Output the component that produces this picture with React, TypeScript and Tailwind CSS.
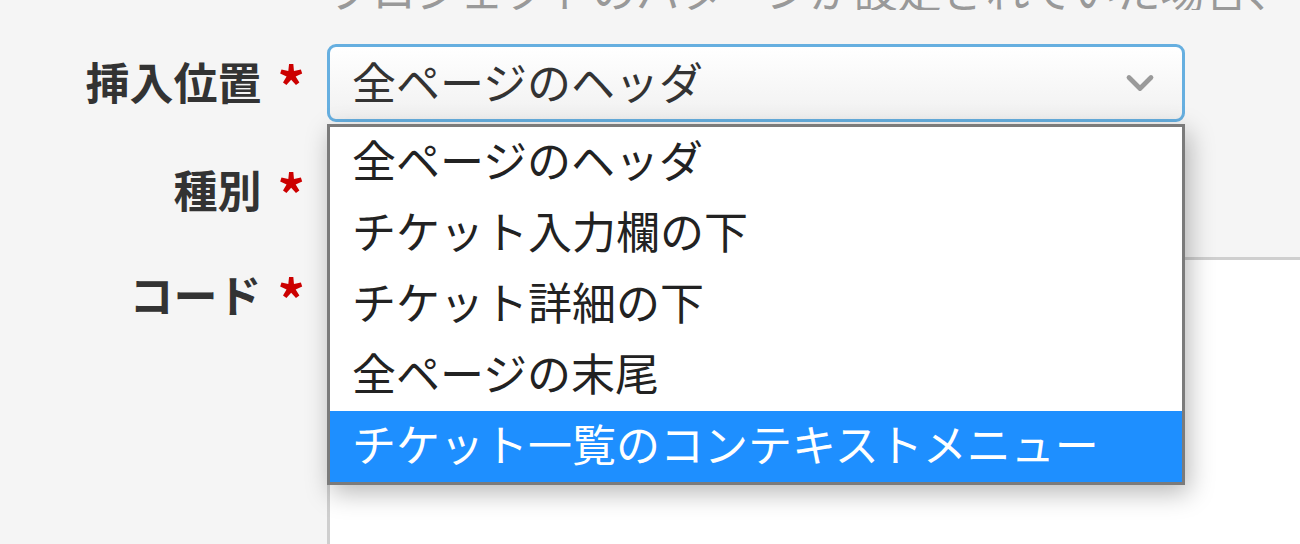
import { ChevronDown } from 'lucide-react'

const options = [
  '全ページのヘッダ',
  'チケット入力欄の下',
  'チケット詳細の下',
  '全ページの末尾',
  'チケット一覧のコンテキストメニュー',
]

function Label({ text }: { text: string }) {
  return (
    <div className="flex h-[78px] w-[327px] shrink-0 items-center justify-end pr-[22px] text-[44px] font-semibold text-[#333]">
      <span className="-translate-y-[2px]">{text}</span>
      <span className="ml-[16px] translate-y-[2px] text-[54px] leading-none text-[#cc0000]">*</span>
    </div>
  )
}

export default function App() {
  const selected = 4

  return (
    <div
      className="relative h-[544px] w-[1300px] overflow-hidden bg-[#f5f5f5]"
      style={{ fontFamily: '"Noto Sans CJK JP", "Noto Sans", sans-serif' }}
    >
      {/* hint text, cut off at the top */}
      <div className="h-[10px] overflow-hidden pl-[328px]">
        <div className="mt-[-33px] whitespace-nowrap text-[44px] leading-[44px] text-[#999]">
          プロジェクトのパターンが設定されていた場合、ブ
        </div>
      </div>

      <div className="mt-[34px] flex flex-col">
        {/* 挿入位置 */}
        <div className="flex">
          <Label text="挿入位置" />
          <div className="flex h-[78px] w-[858px] items-center justify-between rounded-[9px] border-[3px] border-[#66afe0] bg-gradient-to-b from-white to-[#f1f1f1] pl-[22px] pr-[20px]">
            <span className="-translate-y-[2px] text-[44px] text-[#333]">{options[0]}</span>
            <ChevronDown className="h-[44px] w-[44px] text-[#9a9a9a]" strokeWidth={2.6} />
          </div>
        </div>

        {/* 種別 */}
        <div className="mt-[30px] flex">
          <Label text="種別" />
          <div className="flex h-[78px] w-[858px] items-center rounded-[9px] border-[3px] border-[#ccc] bg-white pl-[22px] text-[44px] text-[#333]">
            JavaScript
          </div>
        </div>

        {/* コード */}
        <div className="mt-[27px] flex">
          <Label text="コード" />
          <div className="h-[400px] flex-1 border-l-[3px] border-t-[3px] border-[#cfcfcf] bg-white" />
        </div>
      </div>

      {/* open dropdown */}
      <div className="absolute left-[327px] top-[124px] w-[858px] border-[3px] border-[#7b7b7b] bg-white shadow-[4px_8px_24px_rgba(0,0,0,0.28)]">
        {options.map((o, i) => (
          <div
            key={o}
            className={
              i === selected
                ? 'flex h-[71px] items-center bg-[#1e8fff] pl-[22px] text-[44px] text-white'
                : 'flex h-[71px] items-center pl-[22px] text-[44px] text-[#222]'
            }
          >
            <span className="-translate-y-[4px]">{o}</span>
          </div>
        ))}
      </div>
    </div>
  )
}
